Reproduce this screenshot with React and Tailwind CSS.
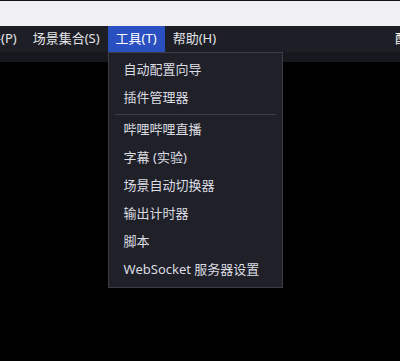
import React from 'react';

const menus = [
  { label: '配置文件(P)' },
  { label: '场景集合(S)' },
  { label: '工具(T)', active: true },
  { label: '帮助(H)' },
];

const toolItems = [
  '自动配置向导',
  '插件管理器',
  '---',
  '哔哩哔哩直播',
  '字幕 (实验)',
  '场景自动切换器',
  '输出计时器',
  '脚本',
  'WebSocket 服务器设置',
];

export default function App() {
  return (
    <div
      className="relative w-[400px] h-[361px] bg-black overflow-hidden text-[13px] text-[#dedfe3]"
      style={{ fontFamily: '"Noto Sans", "Noto Sans CJK SC", sans-serif' }}
    >
      {/* window top */}
      <div className="h-[26px] bg-[#f0f0f3] border-t border-[#111]" />

      {/* menu bar */}
      <div className="relative z-10 h-[26px] bg-[#1e1f26] flex items-stretch">
        <div className="flex items-stretch ml-[-59px]">
          {menus.map((m) => (
            <div
              key={m.label}
              className={`relative px-2 flex items-center whitespace-nowrap ${m.active ? 'bg-[#2a4fc1] text-white' : 'text-[#e4e5e9]'}`}
            >
              {m.label}
              {m.active && (
                <div className="absolute left-0 top-[26px] w-[175px] bg-[#1f2028] border border-[#3c3d46] pt-[3px] pb-[3px] z-20">
                  {toolItems.map((it, i) =>
                    it === '---' ? (
                      <div key={i} className="h-[4px] flex items-center px-[6px]">
                        <div className="h-px w-full bg-[#3c3d46]" />
                      </div>
                    ) : (
                      <div key={i} className="h-[28px] flex items-center pl-[15px] text-[#dcdde2]">
                        {it}
                      </div>
                    )
                  )}
                </div>
              )}
            </div>
          ))}
        </div>
        <div className="absolute left-[395px] top-0 h-full flex items-center text-white">配</div>
      </div>

      {/* dock strip */}
      <div className="h-[10px] bg-[#17181d]" />
    </div>
  );
}
